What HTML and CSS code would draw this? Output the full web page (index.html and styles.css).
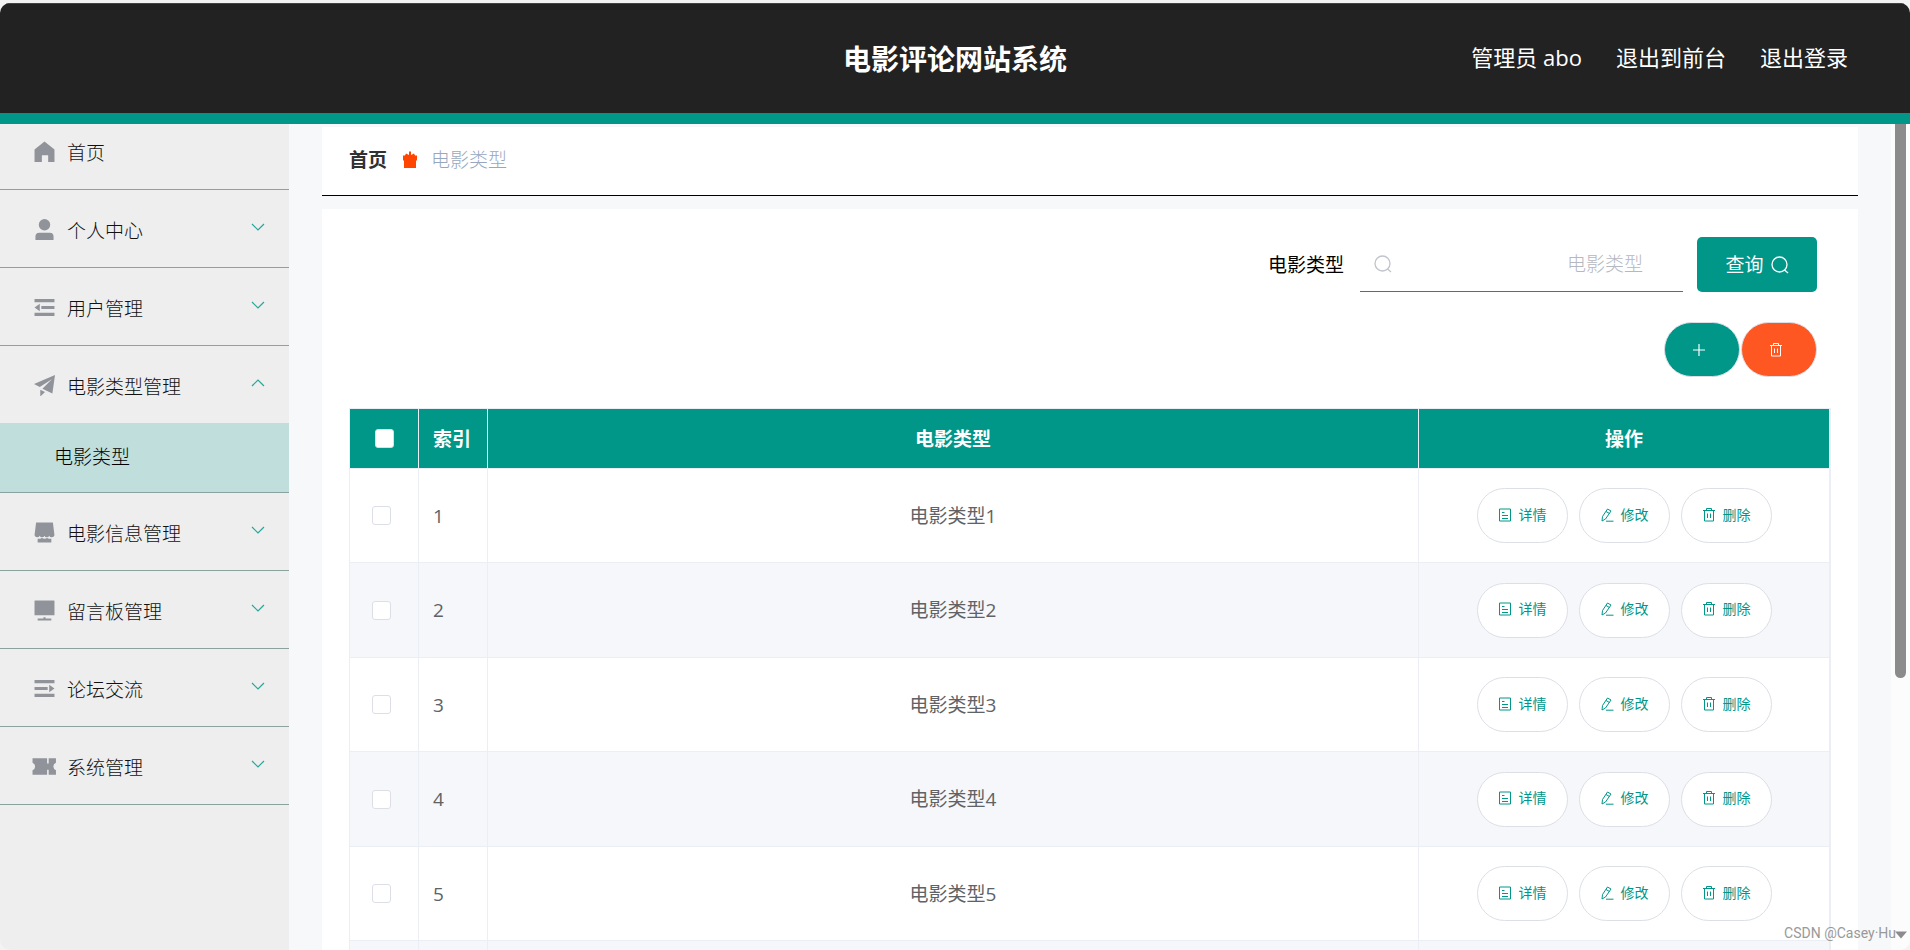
FILE: index.html
```html
<!DOCTYPE html>
<html lang="zh-CN">
<head>
<meta charset="utf-8">
<title>电影评论网站系统</title>
<link rel="stylesheet" href="styles.css">
</head>
<body>
<svg class="sprite" aria-hidden="true">
  <symbol id="home" viewBox="0 0 20 20"><path d="M10 .5 19.500 8v12h-6v-6.500h-6V20h-7V8z"/></symbol>
  <symbol id="user" viewBox="0 0 20 22"><circle cx="10" cy="6" r="6"/><path d="M.5 22v-3.500q0-4 4-4h11q4 0 4 4V22z"/></symbol>
  <symbol id="fold" viewBox="0 0 20 20"><path d="M.5 2h19v3H.5zM7 8.500h12.500v3H7zM.5 15h19v3H.5zM5.500 6.500v7L.5 10z"/></symbol>
  <symbol id="unfold" viewBox="0 0 20 20"><path d="M.5 2h19v3H.5zM.5 8.500h12.500v3H.5zM.5 15h19v3H.5zM14.500 6.500v7l5-3.500z"/></symbol>
  <symbol id="plane" viewBox="0 0 20 20"><path d="M20 0 17.500 17.500 8 13 17 4 5.500 11.500 0 8.500zM6 14l4.500 2.300L6 20.500z"/></symbol>
  <symbol id="shop" viewBox="0 0 20 20"><path d="M2 .5h16l1.500 12q-.5 2-2.500 2t-2.500-1.500q-.5 1.500-2.300 1.500T10 13q-.5 1.500-2.300 1.500T5.400 13q-.5 1.500-2.400 1.500t-2.500-2z"/><path d="M3.500 16h2q1.500 0 2-1 1 1 2.500 1t2.500-1q.5 1 2 1h2v3.500h-13z"/></symbol>
  <symbol id="screen" viewBox="0 0 20 20"><path d="M1 .5h18q.5 0 .5.5v13.500H.5V1q0-.5.500-.5zM9 16.500h2v1h5.500v2h-13v-2H9z"/></symbol>
  <symbol id="ticket" viewBox="0 0 24 18"><path d="M.5 1h14v5h1.500V1h7v4.500q-2.500 1-2.500 3.500t2.500 3.500V17h-7v-5h-1.500v5H.5v-4.500Q3 11.500 3 9T.5 5.500z"/></symbol>
  <symbol id="down" viewBox="0 0 14 8"><path d="m1 1 6 6 6-6" fill="none" stroke="currentColor" stroke-width="1.200"/></symbol>
  <symbol id="up" viewBox="0 0 14 8"><path d="m1 7 6-6 6 6" fill="none" stroke="currentColor" stroke-width="1.200"/></symbol>
  <symbol id="gift" viewBox="0 0 16 18"><path d="M7 .5h2V4l3-1.500 1 2h2v4.500l-1 1v7h-12v-7l-1-1V4.500h2l1-2L7 4z"/></symbol>
  <symbol id="search" viewBox="0 0 18 18"><g fill="none" stroke="currentColor" stroke-width="1.300"><circle cx="8.500" cy="8.500" r="7.500"/><path d="m13.500 14 3.500 3"/></g></symbol>
  <symbol id="plus" viewBox="0 0 14 14"><path d="M7 1v12M1 7h12" fill="none" stroke="currentColor" stroke-width="1.200"/></symbol>
  <symbol id="trash" viewBox="0 0 14 14"><path d="M1 2.500h12M4.500 2.500v-2h5v2M2.500 2.500v10.500h9V2.500M5.500 5.500v4.500M8.500 5.500v4.500" fill="none" stroke="currentColor"/></symbol>
  <symbol id="doc" viewBox="0 0 14 14"><path d="M1.500 1h11v12h-11zM4 4.500h2.500M4 7.500h6M4 10.500h6" fill="none" stroke="currentColor"/></symbol>
  <symbol id="edit" viewBox="0 0 14 14"><path d="M7.500 1 11 3 5.500 11 2 13l.5-4.500zM6 3.500l3.500 2M6 13.200h7.500" fill="none" stroke="currentColor"/></symbol>
</svg>

<div class="app">
  <header class="header">
    <h1 class="title">电影评论网站系统</h1>
    <nav class="account">
      <span>管理员 abo</span>
      <a href="#">退出到前台</a>
      <a href="#">退出登录</a>
    </nav>
  </header>

  <div class="body">
    <aside class="sidebar">
      <a class="item first" href="#"><svg class="icon"><use href="#home"/></svg><span>首页</span></a>
      <a class="item" href="#"><svg class="icon"><use href="#user"/></svg><span>个人中心</span><svg class="arrow"><use href="#down"/></svg></a>
      <a class="item" href="#"><svg class="icon"><use href="#fold"/></svg><span>用户管理</span><svg class="arrow"><use href="#down"/></svg></a>
      <a class="item open" href="#"><svg class="icon"><use href="#plane"/></svg><span>电影类型管理</span><svg class="arrow"><use href="#up"/></svg></a>
      <a class="subitem" href="#">电影类型</a>
      <a class="item" href="#"><svg class="icon"><use href="#shop"/></svg><span>电影信息管理</span><svg class="arrow"><use href="#down"/></svg></a>
      <a class="item" href="#"><svg class="icon"><use href="#screen"/></svg><span>留言板管理</span><svg class="arrow"><use href="#down"/></svg></a>
      <a class="item" href="#"><svg class="icon"><use href="#unfold"/></svg><span>论坛交流</span><svg class="arrow"><use href="#down"/></svg></a>
      <a class="item" href="#"><svg class="icon wide"><use href="#ticket"/></svg><span>系统管理</span><svg class="arrow"><use href="#down"/></svg></a>
    </aside>

    <main class="main">
      <nav class="crumbs">
        <a class="crumb-home" href="#">首页</a>
        <svg class="gift"><use href="#gift"/></svg>
        <span class="crumb-current">电影类型</span>
      </nav>

      <section class="panel">
        <form class="search">
          <label for="type">电影类型</label>
          <div class="field">
            <svg class="glass"><use href="#search"/></svg>
            <input id="type" type="text" placeholder="电影类型">
          </div>
          <button class="query" type="button">查询<svg class="glass"><use href="#search"/></svg></button>
        </form>

        <div class="tools">
          <button class="round add" type="button" aria-label="新增"><svg class="small"><use href="#plus"/></svg></button>
          <button class="round remove" type="button" aria-label="删除"><svg class="small"><use href="#trash"/></svg></button>
        </div>

        <table class="grid">
          <colgroup><col class="col-narrow"><col class="col-narrow"><col><col class="col-actions"></colgroup>
          <thead>
            <tr><th><input class="check" type="checkbox" aria-label="全选"></th><th class="index">索引</th><th>电影类型</th><th>操作</th></tr>
          </thead>
          <tbody>
            <tr><td class="pick"><input class="check" type="checkbox" aria-label="选择 1"></td><td class="index">1</td><td>电影类型1</td>
              <td><div class="actions"><button class="pill" type="button"><svg class="small"><use href="#doc"/></svg>详情</button><button class="pill" type="button"><svg class="small"><use href="#edit"/></svg>修改</button><button class="pill" type="button"><svg class="small"><use href="#trash"/></svg>删除</button></div></td></tr>
            <tr><td class="pick"><input class="check" type="checkbox" aria-label="选择 2"></td><td class="index">2</td><td>电影类型2</td>
              <td><div class="actions"><button class="pill" type="button"><svg class="small"><use href="#doc"/></svg>详情</button><button class="pill" type="button"><svg class="small"><use href="#edit"/></svg>修改</button><button class="pill" type="button"><svg class="small"><use href="#trash"/></svg>删除</button></div></td></tr>
            <tr><td class="pick"><input class="check" type="checkbox" aria-label="选择 3"></td><td class="index">3</td><td>电影类型3</td>
              <td><div class="actions"><button class="pill" type="button"><svg class="small"><use href="#doc"/></svg>详情</button><button class="pill" type="button"><svg class="small"><use href="#edit"/></svg>修改</button><button class="pill" type="button"><svg class="small"><use href="#trash"/></svg>删除</button></div></td></tr>
            <tr><td class="pick"><input class="check" type="checkbox" aria-label="选择 4"></td><td class="index">4</td><td>电影类型4</td>
              <td><div class="actions"><button class="pill" type="button"><svg class="small"><use href="#doc"/></svg>详情</button><button class="pill" type="button"><svg class="small"><use href="#edit"/></svg>修改</button><button class="pill" type="button"><svg class="small"><use href="#trash"/></svg>删除</button></div></td></tr>
            <tr><td class="pick"><input class="check" type="checkbox" aria-label="选择 5"></td><td class="index">5</td><td>电影类型5</td>
              <td><div class="actions"><button class="pill" type="button"><svg class="small"><use href="#doc"/></svg>详情</button><button class="pill" type="button"><svg class="small"><use href="#edit"/></svg>修改</button><button class="pill" type="button"><svg class="small"><use href="#trash"/></svg>删除</button></div></td></tr>
            <tr><td></td><td></td><td></td><td></td></tr>
          </tbody>
        </table>
      </section>
    </main>

    <div class="rail" aria-hidden="true">
      <div class="thumb"></div>
      <svg class="rail-arrow" viewBox="0 0 14 8"><path d="M0 0h14L7 8z"/></svg>
    </div>
  </div>
  <div class="watermark">CSDN @Casey·Hu</div>
</div>
</body>
</html>
```
FILE: styles.css
```css
* { box-sizing: border-box; }

body {
  margin: 0;
  height: 100vh;
  padding-top: 3px;
  overflow: hidden;
  background: #f3f3f3;
  font-family: "Open Sans", "Noto Sans CJK SC", sans-serif;
  font-size: 19px;
  line-height: 28px;
  color: #303133;
}

a { color: inherit; text-decoration: none; }
svg { display: block; flex: none; fill: currentColor; }
button, input { font: inherit; margin: 0; }
button { cursor: pointer; }

.sprite { position: absolute; width: 0; height: 0; }

.app {
  position: relative;
  display: flex;
  flex-direction: column;
  height: 100%;
  overflow: hidden;
  border-radius: 10px;
  background: #f7f8fa;
}

.header {
  flex: none;
  display: grid;
  grid-template-columns: 1fr auto 1fr;
  align-items: center;
  height: 121px;
  padding: 0 62px;
  background: #222;
  border-top: 1px solid #444;
  border-bottom: 11px solid #009688;
  color: #fff;
}
.title { grid-column: 2; margin: 0; font-size: 28px; line-height: 40px; font-weight: 700; }
.account { justify-self: end; display: flex; gap: 34px; padding-bottom: 3px; font-size: 22px; line-height: 32px; }

.body { flex: 1; min-height: 0; display: flex; }

.sidebar { flex: none; width: 289px; background: #eee; overflow: hidden; font-weight: 300; color: #111; }
.item {
  display: flex;
  align-items: center;
  height: 78px;
  padding: 2px 24px 0 34px;
  border-bottom: 1px solid #8ba39f;
}
.item span { padding-top: 2px; }
.item.first { height: 66px; padding-bottom: 12px; }
.item.open { height: 77px; border-bottom: 0; }
.icon { width: 21px; height: 21px; margin-right: 12px; color: #909399; }
.icon.wide { width: 25px; margin: 0 10px 0 -2px; }
.arrow { width: 14px; height: 8px; margin-left: auto; margin-bottom: 6px; color: #26a69a; }
.subitem {
  display: flex;
  align-items: center;
  height: 70px;
  padding: 0 54px 2px;
  background: #c0dedb;
  border-bottom: 1px solid #8ba39f;
  color: #000;
}

.main { flex: 1; min-width: 0; padding: 3px 33px 0; overflow: hidden; }
.crumbs {
  display: flex;
  align-items: center;
  height: 69px;
  padding: 0 27px 2px;
  background: #fff;
  border-bottom: 1px solid #000;
}
.crumb-home { font-weight: 700; }
.gift { width: 16px; height: 18px; margin: 0 13px 0 15px; color: #ff4500; }
.crumb-current { color: #97a8be; font-weight: 300; }

.panel { margin-top: 13px; padding: 28px 27px; background: #fff; }
.search {
  display: flex;
  justify-content: flex-end;
  align-items: center;
  padding-right: 14px;
  color: #000;
}
.field {
  display: flex;
  align-items: center;
  width: 323px;
  height: 55px;
  margin: 0 14px 0 16px;
  padding: 0 40px 0 14px;
  border-bottom: 1px solid #009688;
  color: #c0c4cc;
}
.field input {
  flex: 1;
  min-width: 0;
  padding: 0;
  border: 0;
  outline: 0;
  background: transparent;
  text-align: right;
  color: #606266;
}
.field input::placeholder { color: #b4b8c0; font-weight: 300; }
.glass { width: 18px; height: 18px; }
.query {
  display: flex;
  align-items: center;
  justify-content: center;
  gap: 7px;
  width: 120px;
  height: 55px;
  padding: 0;
  border: 0;
  border-radius: 5px;
  background: #009688;
  color: #fff;
}

.tools { display: flex; justify-content: flex-end; gap: 1px; margin: 30px 0 31px; padding-right: 14px; }
.round {
  width: 76px;
  height: 55px;
  padding: 0 0 0 27px;
  border: 1px solid #dcdfe6;
  border-radius: 28px;
  color: #fff;
}
.add { background: #009688; }
.remove { background: #ff5722; }
.small { width: 14px; height: 14px; }

.grid {
  width: 100%;
  table-layout: fixed;
  border: 1px solid #ebeef5;
  border-right-width: 2px;
  border-spacing: 0;
  text-align: center;
  color: #606266;
}
.col-narrow { width: 69px; }
.col-actions { width: 410px; }
.grid th, .grid td {
  padding: 0;
  border-right: 1px solid #ebeef5;
  border-bottom: 1px solid #ebeef5;
}
.grid th:last-child, .grid td:last-child { border-right: 0; }
.grid th { height: 60px; background: #009688; color: #fff; font-weight: 700; }
.grid td { height: 94px; }
.grid tr:nth-child(even) td { height: 95px; background: #f5f7fa; }
.grid .index { padding-left: 14px; text-align: left; }
.grid .pick { padding-right: 6px; }
.check {
  appearance: none;
  display: block;
  width: 19px;
  height: 19px;
  margin: 0 auto;
  border: 1px solid #dcdfe6;
  border-radius: 3px;
  background: #fff;
}
.actions { display: flex; justify-content: center; gap: 11px; }
.pill {
  display: flex;
  align-items: center;
  gap: 7px;
  height: 55px;
  padding: 0 20px 2px;
  border: 1px solid #dcdfe6;
  border-radius: 28px;
  background: #fff;
  color: #009688;
  font-size: 14px;
  line-height: 20px;
}

.rail {
  flex: none;
  display: flex;
  flex-direction: column;
  justify-content: space-between;
  width: 19px;
  padding: 0 3px 11px 4px;
  background: #fcfcfc;
  color: #8b8b8b;
}
.thumb { width: 11px; height: 68%; border-radius: 0 0 6px 6px; background: #8b8b8b; }
.rail-arrow { width: 12px; height: 8px; }

.watermark {
  position: absolute;
  right: 14px;
  bottom: 7px;
  font: 14px/20px Roboto, sans-serif;
  color: #999;
}
```
